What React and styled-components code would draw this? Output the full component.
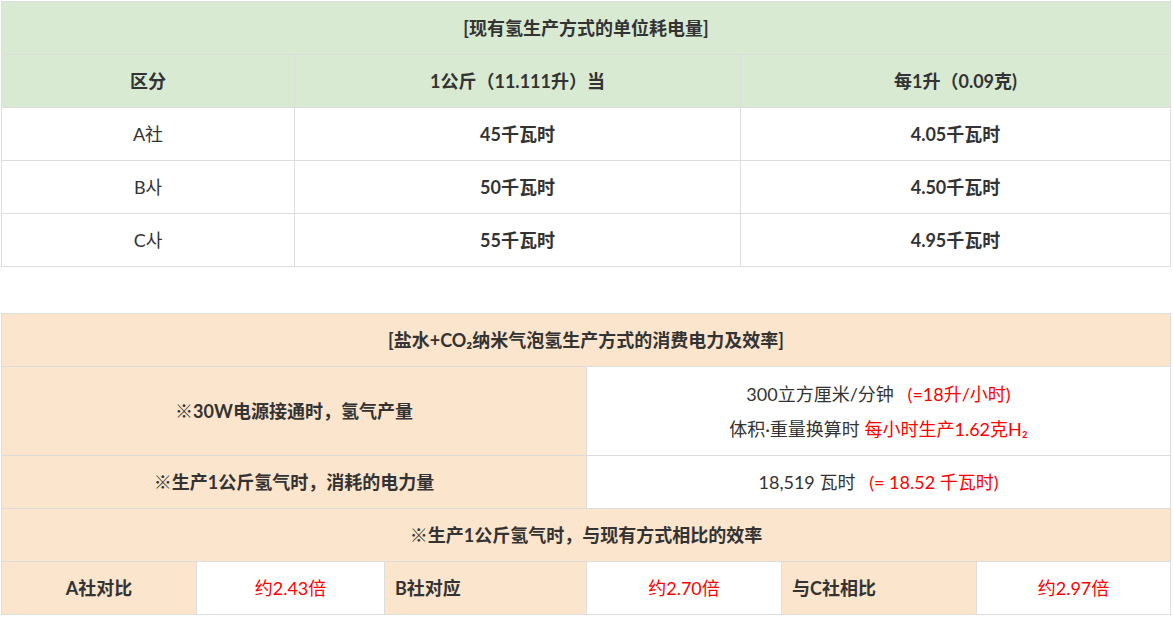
import React from "react";
import styled, { createGlobalStyle } from "styled-components";

const GlobalStyle = createGlobalStyle`
  body {
    margin: 0;
    background: #fff;
    font-family: Lato, "Noto Sans CJK SC", "Noto Sans CJK KR", sans-serif;
    color: #333;
  }
`;

const Page = styled.div`
  padding: 1px 0 0 1px;
  width: 1171px;
`;

const Table = styled.table`
  width: 1170px;
  border-collapse: collapse;
  table-layout: fixed;
  font-size: 18px;
  margin-bottom: ${(p) => p.$gap || 0}px;
`;

const Col = styled.col`
  width: ${(p) => p.$w}px;
`;

const bgs = {
  green: "#d9ead3",
  peach: "#fce5cd",
  white: "#fff",
};

const Cell = styled.td`
  border: 1px solid #ddd;
  height: ${(p) => p.$h || 52}px;
  padding: 0 10px;
  text-align: ${(p) => (p.$left ? "left" : "center")};
  vertical-align: middle;
  background: ${(p) => bgs[p.$bg || "white"]};
  font-weight: ${(p) => (p.$bold ? 700 : 400)};
  line-height: 20px;
`;

const Red = styled.span`
  color: #ff0000;
`;

const Lines = styled.div`
  display: flex;
  flex-direction: column;
  align-items: center;
  gap: 15px;
`;

const existing = [
  ["A社", "45千瓦时", "4.05千瓦时"],
  ["B사", "50千瓦时", "4.50千瓦时"],
  ["C사", "55千瓦时", "4.95千瓦时"],
];

export default function App() {
  return (
    <>
      <GlobalStyle />
      <Page>
        <Table $gap={46}>
          <colgroup>
            <Col $w={293} />
            <Col $w={446} />
            <Col $w={430} />
          </colgroup>
          <tbody>
            <tr>
              <Cell colSpan={3} $bg="green" $bold>
                [现有氢生产方式的单位耗电量]
              </Cell>
            </tr>
            <tr>
              <Cell $bg="green" $bold>区分</Cell>
              <Cell $bg="green" $bold>1公斤（11.111升）当</Cell>
              <Cell $bg="green" $bold>每1升（0.09克)</Cell>
            </tr>
            {existing.map(([name, kg, l]) => (
              <tr key={name}>
                <Cell>{name}</Cell>
                <Cell $bold>{kg}</Cell>
                <Cell $bold>{l}</Cell>
              </tr>
            ))}
          </tbody>
        </Table>

        <Table>
          <colgroup>
            <Col $w={195} />
            <Col $w={188} />
            <Col $w={202} />
            <Col $w={195} />
            <Col $w={195} />
            <Col $w={194} />
          </colgroup>
          <tbody>
            <tr>
              <Cell colSpan={6} $bg="peach" $bold>
                [盐水+CO₂纳米气泡氢生产方式的消费电力及效率]
              </Cell>
            </tr>
            <tr>
              <Cell colSpan={3} $bg="peach" $bold $h={88}>
                ※30W电源接通时，氢气产量
              </Cell>
              <Cell colSpan={3} $h={88}>
                <Lines>
                  <span>
                    300立方厘米/分钟&nbsp;&nbsp;&nbsp;<Red>(=18升/小时)</Red>
                  </span>
                  <span>
                    体积·重量换算时 <Red>每小时生产1.62克H₂</Red>
                  </span>
                </Lines>
              </Cell>
            </tr>
            <tr>
              <Cell colSpan={3} $bg="peach" $bold>
                ※生产1公斤氢气时，消耗的电力量
              </Cell>
              <Cell colSpan={3}>
                18,519 瓦时&nbsp;&nbsp;&nbsp;<Red>(= 18.52 千瓦时)</Red>
              </Cell>
            </tr>
            <tr>
              <Cell colSpan={6} $bg="peach" $bold>
                ※生产1公斤氢气时，与现有方式相比的效率
              </Cell>
            </tr>
            <tr>
              <Cell $bg="peach" $bold>A社对比</Cell>
              <Cell><Red>约2.43倍</Red></Cell>
              <Cell $bg="peach" $bold $left>B社对应</Cell>
              <Cell><Red>约2.70倍</Red></Cell>
              <Cell $bg="peach" $bold $left>与C社相比</Cell>
              <Cell><Red>约2.97倍</Red></Cell>
            </tr>
          </tbody>
        </Table>
      </Page>
    </>
  );
}
